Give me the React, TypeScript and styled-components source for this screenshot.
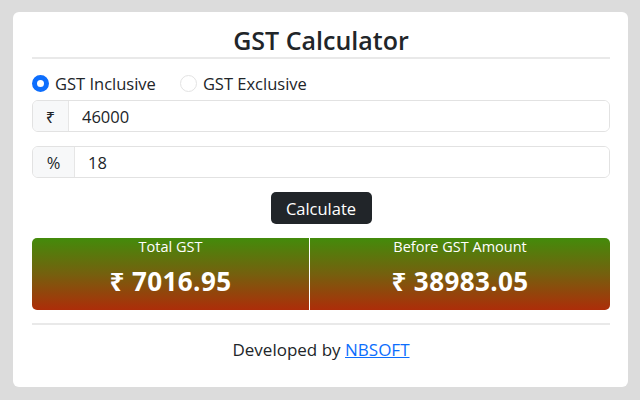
import styled, { createGlobalStyle } from 'styled-components';

const GlobalStyle = createGlobalStyle`
  * { box-sizing: border-box; }
  body {
    margin: 0;
    background: #dcdcdc;
    font-family: "Open Sans", "Noto Sans", sans-serif;
    color: #212529;
  }
`;

const Page = styled.div`
  padding: 12px 12px 13px 13px;
`;

const Card = styled.div`
  width: 615px;
  height: 375px;
  background: #fff;
  border-radius: 6px;
  padding: 13px 18px 0 19px;
`;

const Title = styled.h3`
  margin: 0;
  text-align: center;
  font-size: 25px;
  font-weight: 600;
  line-height: 30px;
`;

const Rule = styled.hr<{ $gap: number }>`
  margin: ${(p) => p.$gap}px 0 0;
  border: 0;
  border-top: 2px solid #e9e9e9;
`;

const RadioRow = styled.div`
  display: flex;
  align-items: center;
  gap: 24px;
  margin-top: 14px;
  height: 20px;
`;

const RadioLabel = styled.label`
  display: flex;
  align-items: center;
  gap: 6px;
  font-size: 16.5px;
`;

const RadioDot = styled.span<{ $checked?: boolean }>`
  width: 17px;
  height: 17px;
  border-radius: 50%;
  border: ${(p) => (p.$checked ? '5px solid #0d6efd' : '1px solid #e3e3e3')};
  background: #fff;
`;

const InputGroup = styled.div<{ $top: number }>`
  display: flex;
  height: 32px;
  margin-top: ${(p) => p.$top}px;
  border: 1px solid #e2e2e2;
  border-radius: 6px;
  overflow: hidden;
`;

const Addon = styled.span<{ $width: number }>`
  width: ${(p) => p.$width}px;
  display: flex;
  align-items: center;
  justify-content: center;
  background: #f7f8f9;
  border-right: 1px solid #e6e6e6;
  font-size: 16.5px;
`;

const Field = styled.input`
  flex: 1;
  border: 0;
  outline: 0;
  padding: 0 13px;
  font: inherit;
  font-size: 16.5px;
  color: #212529;
`;

const ButtonRow = styled.div`
  display: flex;
  justify-content: center;
  margin-top: 14px;
`;

const Button = styled.button`
  width: 101px;
  height: 32px;
  background: #212529;
  color: #fff;
  border: 0;
  border-radius: 5px;
  font: inherit;
  font-size: 16.5px;
`;

const Results = styled.div`
  display: grid;
  grid-template-columns: 277px 1fr;
  gap: 1px;
  margin-top: 14px;
  height: 72px;
  background: #fff;
  border-radius: 5px;
  overflow: hidden;
`;

const ResultBox = styled.div`
  display: flex;
  flex-direction: column;
  align-items: center;
  color: #fff;
  background: linear-gradient(180deg, #438b0b 0%, #75600e 50%, #ad2d09 100%);
`;

const ResultLabel = styled.span`
  font-size: 14.5px;
  line-height: 18px;
`;

const ResultValue = styled.span`
  margin-top: 10px;
  font-size: 26px;
  font-weight: 700;
  line-height: 30px;
  letter-spacing: 0.4px;
`;

const Footer = styled.p`
  margin: 13px 0 0;
  text-align: center;
  font-size: 17px;
  line-height: 24px;

  a {
    color: #0d6efd;
  }
`;

export default function App() {
  return (
    <Page>
      <GlobalStyle />
      <Card>
        <Title>GST Calculator</Title>
        <Rule $gap={2} />
        <RadioRow>
          <RadioLabel>
            <RadioDot $checked />
            GST Inclusive
          </RadioLabel>
          <RadioLabel>
            <RadioDot />
            GST Exclusive
          </RadioLabel>
        </RadioRow>
        <InputGroup $top={7}>
          <Addon $width={36}>₹</Addon>
          <Field defaultValue="46000" />
        </InputGroup>
        <InputGroup $top={14}>
          <Addon $width={42}>%</Addon>
          <Field defaultValue="18" />
        </InputGroup>
        <ButtonRow>
          <Button>Calculate</Button>
        </ButtonRow>
        <Results>
          <ResultBox>
            <ResultLabel>Total GST</ResultLabel>
            <ResultValue>₹ 7016.95</ResultValue>
          </ResultBox>
          <ResultBox>
            <ResultLabel>Before GST Amount</ResultLabel>
            <ResultValue>₹ 38983.05</ResultValue>
          </ResultBox>
        </Results>
        <Rule $gap={13} />
        <Footer>
          Developed by <a href="#">NBSOFT</a>
        </Footer>
      </Card>
    </Page>
  );
}
